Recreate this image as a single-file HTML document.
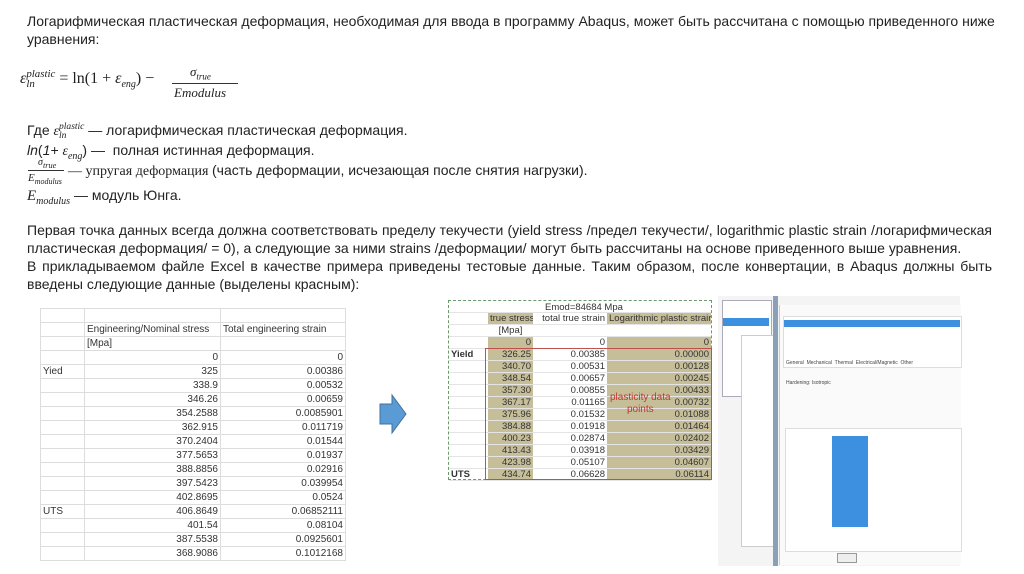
<!DOCTYPE html>
<html><head><meta charset="utf-8"><style>
body{margin:0;width:1024px;height:574px;background:#fff;position:relative;overflow:hidden;font-family:"Liberation Sans",sans-serif;color:#222}
.a{position:absolute;white-space:nowrap}
.t{font-size:14px}
.m{font-family:"Liberation Serif",serif;font-style:italic}
.ss{display:inline-block;vertical-align:middle;line-height:0.95;font-size:0.68em;text-align:left}
table{border-collapse:collapse;position:absolute}
td{padding:0 2px;white-space:nowrap;overflow:hidden}
.lt td{border:1px solid #ddd;height:13px;font-size:10px;color:#333;text-align:right}
.mt td{height:11px;font-size:9.5px;color:#333;text-align:right;border-bottom:1px solid #e4e4e4}
.tan{background:#c6be98}
</style></head><body>
<div class="a t" style="left:27px;top:13px">Логарифмическая пластическая деформация, необходимая для ввода в программу Abaqus, может быть рассчитана с помощью приведенного ниже</div>
<div class="a t" style="left:27px;top:31px">уравнения:</div>
<div class="a m" style="left:20px;top:69px;font-size:16px">ε<span class="ss">plastic<br>ln</span> <span style="font-style:normal">= ln(1 + </span>ε<sub style="font-size:10px">eng</sub><span style="font-style:normal">) −</span></div>
<div class="a m" style="left:190px;top:64px;font-size:13px">σ<sub style="font-size:9px">true</sub></div>
<div style="position:absolute;left:172px;top:83px;width:66px;border-top:1px solid #333"></div>
<div class="a m" style="left:174px;top:85px;font-size:13px">Emodulus</div>
<div class="a t" style="left:27px;top:122px">Где <span class="m">ε<span class="ss">plastic<br>ln</span></span> — логарифмическая пластическая деформация.</div>
<div class="a t" style="left:27px;top:142px"><i>ln</i>(<i>1+ </i><span class="m">ε<sub style="font-size:10px">eng</sub></span>) — &nbsp;полная истинная деформация.</div>
<div class="a m" style="left:38px;top:157px;font-size:10px">σ<sub>true</sub></div>
<div style="position:absolute;left:28px;top:170px;width:36px;border-top:1px solid #333"></div>
<div class="a m" style="left:28px;top:172px;font-size:11px">E<sub style="font-size:8px">modulus</sub></div>
<div class="a" style="left:68px;top:162px;font-size:14px;font-family:'Liberation Serif',serif">— упругая деформация <span style="font-family:'Liberation Sans',sans-serif">(часть деформации, исчезающая после снятия нагрузки).</span></div>
<div class="a t" style="left:27px;top:187px"><span class="m" style="font-size:15px">E<sub style="font-size:10px">modulus</sub></span> — модуль Юнга.</div>
<div class="a t" style="left:27px;top:222px;width:965px;text-align:justify;text-align-last:justify;white-space:normal">Первая точка данных всегда должна соответствовать пределу текучести (yield stress /предел текучести/, logarithmic plastic strain /логарифмическая</div>
<div class="a t" style="left:27px;top:240px">пластическая деформация/ = 0), а следующие за ними strains /деформации/ могут быть рассчитаны на основе приведенного выше уравнения.</div>
<div class="a t" style="left:27px;top:258px;width:965px;text-align:justify;text-align-last:justify;white-space:normal">В прикладываемом файле Excel в качестве примера приведены тестовые данные. Таким образом, после конвертации, в Abaqus должны быть</div>
<div class="a t" style="left:27px;top:276px">введены следующие данные (выделены красным):</div>

<table class="lt" style="left:40px;top:308px;width:306px">
<tr><td style="width:39px"></td><td style="width:131px"></td><td></td></tr>
<tr><td></td><td style="text-align:left">Engineering/Nominal stress</td><td style="text-align:left">Total engineering strain</td></tr>
<tr><td></td><td style="text-align:left">[Mpa]</td><td></td></tr>
<tr><td></td><td>0</td><td>0</td></tr>
<tr><td style="text-align:left">Yied</td><td>325</td><td>0.00386</td></tr>
<tr><td></td><td>338.9</td><td>0.00532</td></tr>
<tr><td></td><td>346.26</td><td>0.00659</td></tr>
<tr><td></td><td>354.2588</td><td>0.0085901</td></tr>
<tr><td></td><td>362.915</td><td>0.011719</td></tr>
<tr><td></td><td>370.2404</td><td>0.01544</td></tr>
<tr><td></td><td>377.5653</td><td>0.01937</td></tr>
<tr><td></td><td>388.8856</td><td>0.02916</td></tr>
<tr><td></td><td>397.5423</td><td>0.039954</td></tr>
<tr><td></td><td>402.8695</td><td>0.0524</td></tr>
<tr><td style="text-align:left">UTS</td><td>406.8649</td><td>0.06852111</td></tr>
<tr><td></td><td>401.54</td><td>0.08104</td></tr>
<tr><td></td><td>387.5538</td><td>0.0925601</td></tr>
<tr><td></td><td>368.9086</td><td>0.1012168</td></tr>
</table>

<svg class="a" style="left:378px;top:393px" width="30" height="42"><path d="M2 11 H14 V2 L28 21 L14 40 V31 H2 Z" fill="#5b9bd5" stroke="#41719c"/></svg>

<div style="position:absolute;left:448px;top:300px;width:262px;height:178px;border:1px dashed #6a9a6a"></div>
<table class="mt" style="left:449px;top:301px;width:262px;table-layout:fixed">
<tr><td style="width:35px"></td><td style="width:41px"></td><td style="width:70px"></td><td></td></tr>
<tr><td></td><td class="tan">true stress</td><td>total true strain</td><td class="tan" style="text-align:center">Logarithmic plastic strain</td></tr>
<tr><td></td><td style="text-align:center">[Mpa]</td><td></td><td></td></tr>
<tr class="tan"><td style="background:#fff"></td><td>0</td><td style="background:#fff">0</td><td>0</td></tr>
<tr><td style="text-align:left;font-weight:bold">Yield</td><td class="tan">326.25</td><td>0.00385</td><td class="tan">0.00000</td></tr>
<tr><td></td><td class="tan">340.70</td><td>0.00531</td><td class="tan">0.00128</td></tr>
<tr><td></td><td class="tan">348.54</td><td>0.00657</td><td class="tan">0.00245</td></tr>
<tr><td></td><td class="tan">357.30</td><td>0.00855</td><td class="tan">0.00433</td></tr>
<tr><td></td><td class="tan">367.17</td><td>0.01165</td><td class="tan">0.00732</td></tr>
<tr><td></td><td class="tan">375.96</td><td>0.01532</td><td class="tan">0.01088</td></tr>
<tr><td></td><td class="tan">384.88</td><td>0.01918</td><td class="tan">0.01464</td></tr>
<tr><td></td><td class="tan">400.23</td><td>0.02874</td><td class="tan">0.02402</td></tr>
<tr><td></td><td class="tan">413.43</td><td>0.03918</td><td class="tan">0.03429</td></tr>
<tr><td></td><td class="tan">423.98</td><td>0.05107</td><td class="tan">0.04607</td></tr>
<tr><td style="text-align:left;font-weight:bold">UTS</td><td class="tan">434.74</td><td>0.06628</td><td class="tan">0.06114</td></tr>
</table>
<div class="a" style="left:545px;top:302px;font-size:9.5px;color:#333">Emod=84684 Mpa</div>
<div style="position:absolute;left:485px;top:348px;width:225px;height:130px;border:1.5px solid #c0504d"></div>
<div class="a" style="left:610px;top:392px;font-size:10px;color:#c0392b;text-align:center;line-height:12px">plasticity data<br>points</div>

<div style="position:absolute;left:718px;top:296px;width:242px;height:270px;background:#f4f4f4"></div>
<div style="position:absolute;left:722px;top:300px;width:48px;height:95px;background:#fff;border:1px solid #aab"></div>
<div style="position:absolute;left:723px;top:318px;width:46px;height:8px;background:#3d8fe0"></div>
<div style="position:absolute;left:741px;top:335px;width:35px;height:210px;background:#fff;border:1px solid #ccc"></div>
<div style="position:absolute;left:773px;top:296px;width:5px;height:270px;background:#8aa0b8"></div>
<div style="position:absolute;left:779px;top:305px;width:181px;height:260px;background:#fafafa;border-left:1px solid #ccc"></div>
<div style="position:absolute;left:783px;top:316px;width:177px;height:50px;background:#fff;border:1px solid #ddd"></div>
<div style="position:absolute;left:784px;top:320px;width:176px;height:7px;background:#3d8fe0"></div>
<div class="a" style="left:786px;top:360px;font-size:5px;color:#444">General &nbsp;Mechanical &nbsp;Thermal &nbsp;Electrical/Magnetic &nbsp;Other</div>
<div class="a" style="left:786px;top:380px;font-size:5px;color:#444">Hardening: Isotropic</div>
<div style="position:absolute;left:785px;top:428px;width:175px;height:122px;background:#fff;border:1px solid #ddd"></div>
<div style="position:absolute;left:832px;top:436px;width:36px;height:91px;background:#3d8fe0"></div>
<div style="position:absolute;left:837px;top:553px;width:18px;height:8px;border:1px solid #999;background:#eee"></div>
</body></html>
